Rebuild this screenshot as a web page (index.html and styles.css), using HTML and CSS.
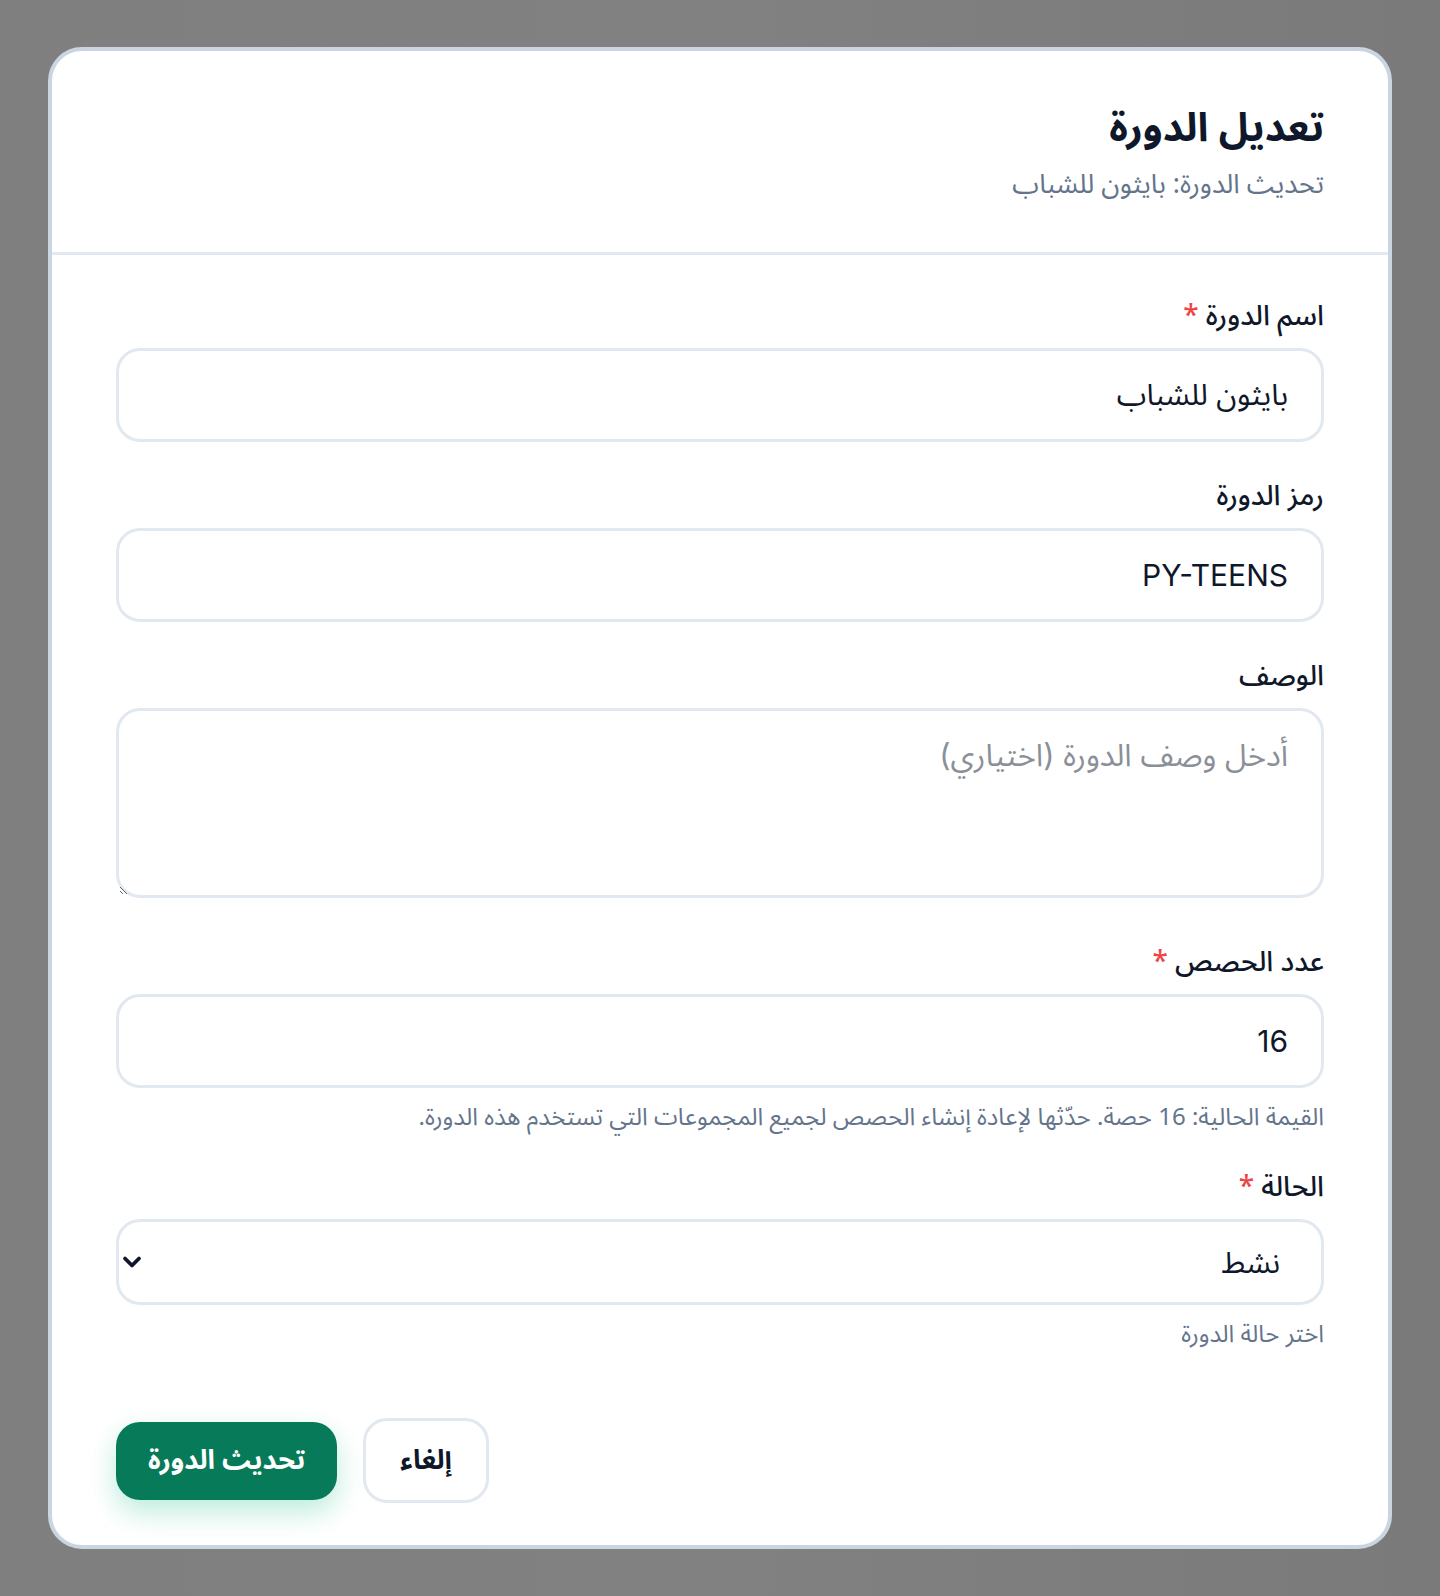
FILE: index.html
```html
<!DOCTYPE html>
<html lang="ar" dir="rtl">
<head>
<meta charset="utf-8">
<title>تعديل الدورة</title>
<link rel="stylesheet" href="styles.css">
</head>
<body>
<div class="overlay">
  <div class="modal">
    <div class="modal-header">
      <h2 class="title">تعديل الدورة</h2>
      <p class="subtitle">تحديث الدورة: بايثون للشباب</p>
    </div>
    <form class="modal-body">
      <div class="field">
        <label class="label">اسم الدورة <span class="req">*</span></label>
        <input class="input" type="text" value="بايثون للشباب">
      </div>
      <div class="field">
        <label class="label">رمز الدورة</label>
        <input class="input" type="text" value="PY-TEENS">
      </div>
      <div class="field">
        <label class="label">الوصف</label>
        <textarea class="input textarea" placeholder="أدخل وصف الدورة (اختياري)"></textarea>
      </div>
      <div class="field">
        <label class="label">عدد الحصص <span class="req">*</span></label>
        <input class="input" type="text" value="16">
        <p class="help">القيمة الحالية: 16 حصة. حدّثها لإعادة إنشاء الحصص لجميع المجموعات التي تستخدم هذه الدورة.</p>
      </div>
      <div class="field">
        <label class="label">الحالة <span class="req">*</span></label>
        <div class="select-wrap">
          <select class="input select">
            <option>نشط</option>
            <option>غير نشط</option>
          </select>
          <svg class="chevron" width="20" height="14" viewBox="0 0 20 14" aria-hidden="true"><path d="M3 3.5 L10 10.5 L17 3.5" fill="none" stroke="#0f172a" stroke-width="3.8" stroke-linecap="round" stroke-linejoin="round"/></svg>
        </div>
        <p class="help">اختر حالة الدورة</p>
      </div>
      <div class="actions">
        <button type="button" class="btn btn-cancel">إلغاء</button>
        <button type="button" class="btn btn-primary">تحديث الدورة</button>
      </div>
    </form>
  </div>
</div>
</body>
</html>
```

FILE: styles.css
```css
* { box-sizing: border-box; }

html, body {
  margin: 0;
  padding: 0;
}

body {
  background: #7e7e7e;
  font-family: "Noto Sans Arabic", "Noto Sans", Inter, "DejaVu Sans", sans-serif;
  color: #0f172a;
}

.overlay {
  min-height: 1596px;
  padding: 0 48px;
  display: flex;
  align-items: center;
  justify-content: center;
  background: linear-gradient(90deg, #7f7f7f 0%, #818181 50%, #7a7a7a 100%);
}

.modal {
  width: 1344px;
  background: #ffffff;
  border: 4px solid #cbd5e1;
  border-radius: 34px;
  overflow: hidden;
}

.modal-header {
  padding: 48px 64px 45px;
  border-bottom: 3px solid #e2e8f0;
}

.title {
  margin: 0;
  font-size: 40px;
  line-height: 60px;
  font-weight: 700;
  color: #0f172a;
}

.subtitle {
  margin: 4px 0 0;
  font-size: 27px;
  line-height: 44px;
  color: #64748b;
}

.modal-body {
  padding: 45px 64px 42px;
  display: flex;
  flex-direction: column;
  gap: 38px;
}

.field {
  display: flex;
  flex-direction: column;
}

.label {
  font-size: 28px;
  line-height: 34px;
  font-weight: 500;
  margin-bottom: 14px;
  color: #0f172a;
}

.req {
  color: #ef4444;
}

.input {
  width: 100%;
  height: 94px;
  border: 3px solid #e2e8f0;
  border-radius: 24px;
  background: #ffffff;
  padding: 0 33px;
  font-family: Inter, "Noto Sans Arabic", "DejaVu Sans", sans-serif;
  font-size: 30px;
  color: #0f172a;
  outline: none;
}

.textarea {
  display: block;
  height: 190px;
  padding: 24px 33px;
  line-height: 40px;
  font-size: 31px;
  resize: vertical;
  margin-bottom: 10px;
}

.textarea::placeholder {
  color: #8b8f98;
}

.select-wrap {
  position: relative;
}

.select {
  height: 86px;
  padding-right: 41px;
  appearance: none;
  -webkit-appearance: none;
}

.chevron {
  position: absolute;
  left: 6px;
  top: 36px;
  pointer-events: none;
}

.help {
  margin: 15px 0 0;
  font-size: 24px;
  line-height: 30px;
  color: #64748b;
}

.actions {
  margin-top: 30px;
  display: flex;
  justify-content: flex-end;
  align-items: center;
  gap: 26px;
}

.btn {
  font-family: "Noto Sans Arabic", Inter, "DejaVu Sans", sans-serif;
  font-size: 27px;
  line-height: 32px;
  font-weight: 700;
  border-radius: 24px;
  cursor: pointer;
}

.btn-cancel {
  background: #ffffff;
  color: #0f172a;
  border: 3px solid #e2e8f0;
  padding: 23.5px 34px;
}

.btn-primary {
  background: #077a59;
  color: #ffffff;
  border: 0;
  padding: 23px 32px;
  box-shadow: 0 12px 28px rgba(16, 185, 129, 0.28);
}
```
